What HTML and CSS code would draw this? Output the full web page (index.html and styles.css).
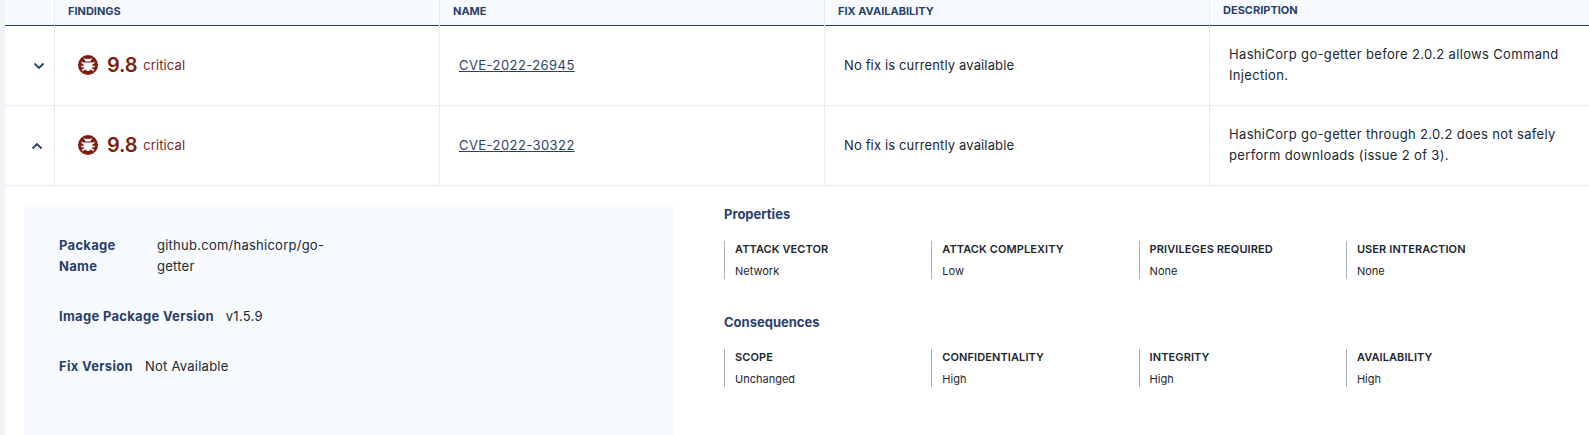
FILE: index.html
```html
<!DOCTYPE html>
<html lang="en">

<head>
    <meta charset="UTF-8">
    <meta name="viewport" content="width=device-width, initial-scale=1.0">
    <title>Findings</title>
    <link rel="stylesheet" href="styles.css">
</head>

<body>
    <div class="content">
        <div class="row head-row">
            <div class="cell toggle-cell"></div>
            <div class="cell findings-cell">Findings</div>
            <div class="cell name-cell">Name</div>
            <div class="cell fix-cell">Fix Availability</div>
            <div class="cell desc-cell">Description</div>
        </div>

        <div class="row">
            <div class="cell toggle-cell toggle-closed">
                <svg class="chevron" viewBox="0 0 12 8" width="12" height="8"><path d="M1.500 1.500 6 6l4.500-4.500" /></svg>
            </div>
            <div class="cell findings-cell">
                <svg class="bug" viewBox="0 0 20 20" width="20" height="20">
                    <circle cx="10" cy="10" r="10" fill="#7a1f12" />
                    <path fill="#fff" d="M7.200 6.600a2.800 2.800 0 0 1 5.600 0zM5.800 7.400h8.400v3.800a4.200 4.800 0 0 1-8.400 0z" />
                    <path class="legs" d="M6.400 3.400 8 5.400M13.600 3.400 12 5.400M3.600 7.400l3 1.800M16.400 7.400l-3 1.800M3.400 11.400h3M16.600 11.400h-3M4.400 15.600l2.800-2.600M15.600 15.600l-2.800-2.600" />
                </svg>
                <span class="score">9.8</span>
                <span class="severity">critical</span>
            </div>
            <div class="cell name-cell"><a href="#">CVE-2022-26945</a></div>
            <div class="cell fix-cell">No fix is currently available</div>
            <div class="cell desc-cell">HashiCorp go-getter before 2.0.2 allows Command Injection.</div>
        </div>

        <div class="row">
            <div class="cell toggle-cell">
                <svg class="chevron" viewBox="0 0 12 8" width="12" height="8"><path d="M1.500 6.500 6 2l4.500 4.500" /></svg>
            </div>
            <div class="cell findings-cell">
                <svg class="bug" viewBox="0 0 20 20" width="20" height="20">
                    <circle cx="10" cy="10" r="10" fill="#7a1f12" />
                    <path fill="#fff" d="M7.200 6.600a2.800 2.800 0 0 1 5.600 0zM5.800 7.400h8.400v3.800a4.200 4.800 0 0 1-8.400 0z" />
                    <path class="legs" d="M6.400 3.400 8 5.400M13.600 3.400 12 5.400M3.600 7.400l3 1.800M16.400 7.400l-3 1.800M3.400 11.400h3M16.600 11.400h-3M4.400 15.600l2.800-2.600M15.600 15.600l-2.800-2.600" />
                </svg>
                <span class="score">9.8</span>
                <span class="severity">critical</span>
            </div>
            <div class="cell name-cell"><a href="#">CVE-2022-30322</a></div>
            <div class="cell fix-cell">No fix is currently available</div>
            <div class="cell desc-cell">HashiCorp go-getter through 2.0.2 does not safely perform downloads (issue 2 of 3).</div>
        </div>

        <div class="details">
            <div class="package-box">
                <div class="package-line">
                    <span class="package-label narrow">Package Name</span>
                    <span class="package-value narrow-value">github.com/hashicorp/go-getter</span>
                </div>
                <div class="package-line">
                    <span class="package-label">Image Package Version</span>
                    <span class="package-value">v1.5.9</span>
                </div>
                <div class="package-line">
                    <span class="package-label">Fix Version</span>
                    <span class="package-value">Not Available</span>
                </div>
            </div>

            <div class="metrics">
                <h3 class="metrics-title">Properties</h3>
                <div class="metric-grid">
                    <div class="metric"><div class="metric-name">Attack Vector</div><div class="metric-value">Network</div></div>
                    <div class="metric"><div class="metric-name">Attack Complexity</div><div class="metric-value">Low</div></div>
                    <div class="metric"><div class="metric-name">Privileges Required</div><div class="metric-value">None</div></div>
                    <div class="metric"><div class="metric-name">User Interaction</div><div class="metric-value">None</div></div>
                </div>
                <h3 class="metrics-title">Consequences</h3>
                <div class="metric-grid">
                    <div class="metric"><div class="metric-name">Scope</div><div class="metric-value">Unchanged</div></div>
                    <div class="metric"><div class="metric-name">Confidentiality</div><div class="metric-value">High</div></div>
                    <div class="metric"><div class="metric-name">Integrity</div><div class="metric-value">High</div></div>
                    <div class="metric"><div class="metric-name">Availability</div><div class="metric-value">High</div></div>
                </div>
            </div>
        </div>
    </div>
</body>

</html>
```

FILE: styles.css
```css
body {
    margin: 0;
    height: 435px;
    overflow: hidden;
    background-color: #f0f4f8;
    font-family: Inter, "Liberation Sans", sans-serif;
    font-size: 13px;
    color: #21272f;
}

.content {
    margin-left: 5px;
    height: 435px;
    background-color: #fff;
}

.row {
    display: grid;
    grid-template-columns: 50px 385px 385px 385px 1fr;
    height: 80px;
    box-sizing: border-box;
    border-bottom: 1px solid #e8ecf1;
}

.head-row {
    height: 26px;
    background-color: #f7fbff;
    border-bottom: 1px solid #2b3f6b;
    font-size: 11px;
    font-weight: 700;
    text-transform: uppercase;
    color: #2b3f6b;
}

.cell {
    display: flex;
    align-items: center;
    border-right: 1px solid #e8ecf1;
    padding-left: 19px;
    padding-bottom: 2px;
}

.cell:last-child {
    border-right: 0;
}

.head-row .cell {
    padding-left: 13px;
    padding-bottom: 9px;
}

.fix-cell {
    letter-spacing: 0.14px;
}

.desc-cell {
    line-height: 21px;
    padding-right: 30px;
    letter-spacing: 0.34px;
}

.head-row .fix-cell,
.head-row .desc-cell {
    letter-spacing: 0;
}

.toggle-cell {
    padding-left: 26px;
    padding-bottom: 0;
}

.toggle-closed {
    padding-left: 28px;
}

.chevron {
    fill: none;
    stroke: #2b3f6b;
    stroke-width: 1.8;
}

.findings-cell {
    padding-left: 23px;
}

.bug {
    margin-right: 9px;
}

.legs {
    stroke: #fff;
    stroke-width: 1.5;
}

.score {
    font-size: 20px;
    font-weight: 600;
    letter-spacing: -0.2px;
    color: #7a1f12;
    margin-right: 6px;
}

.severity {
    color: #7a1f12;
    letter-spacing: 0.1px;
}

.name-cell a {
    color: #2b3f6b;
    letter-spacing: 0.43px;
}

.details {
    display: flex;
    padding: 19px 0 0 19px;
}

.package-box {
    width: 650px;
    height: 232px;
    box-sizing: border-box;
    padding: 30px 35px;
    background-color: #f7fbff;
    margin-right: 50px;
    line-height: 21px;
}

.package-line {
    display: flex;
    margin-bottom: 29px;
}

.package-label {
    font-weight: 700;
    letter-spacing: 0.3px;
    color: #2b3f6b;
    margin-right: 12px;
}

.package-value {
    letter-spacing: 0.25px;
}

.narrow {
    width: 86px;
}

.narrow-value {
    width: 180px;
    overflow-wrap: anywhere;
}

.metrics {
    flex: 1;
}

.metrics-title {
    margin: 0;
    font-size: 13px;
    font-weight: 700;
    line-height: 18px;
    color: #2b3f6b;
}

.metric-grid {
    display: grid;
    grid-template-columns: repeat(4, 207.300px);
    margin: 18px 0 34px;
}

.metric {
    border-left: 1px solid #a9b0bd;
    padding-left: 10px;
    height: 38px;
}

.metric-name {
    font-size: 11px;
    font-weight: 600;
    letter-spacing: 0.1px;
    line-height: 16px;
    text-transform: uppercase;
    margin-bottom: 6px;
}

.metric-value {
    font-size: 11px;
    line-height: 16px;
}
```
